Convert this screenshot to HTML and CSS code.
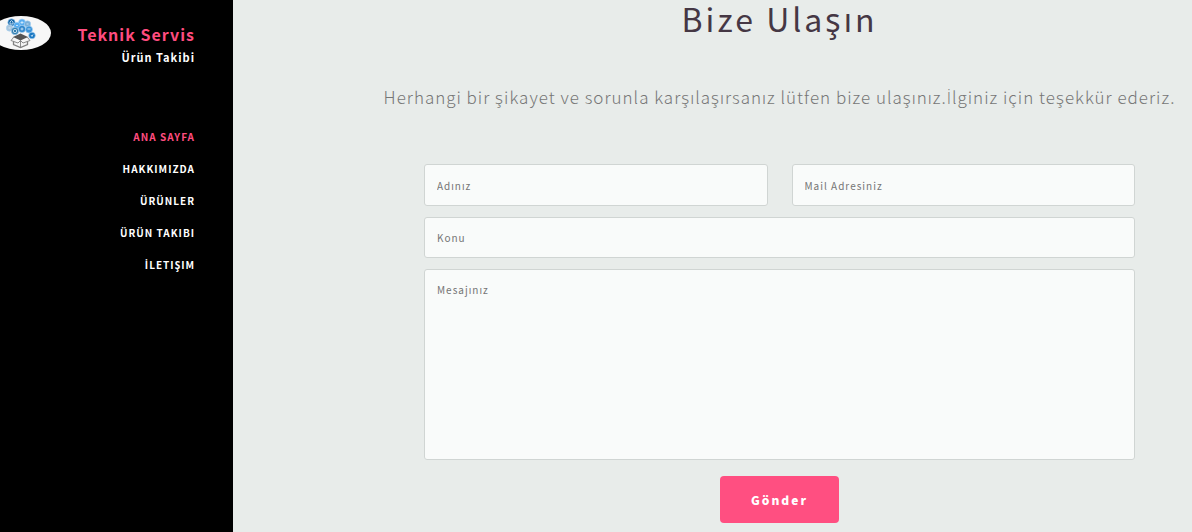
FILE: index.html
```html
<!DOCTYPE html>
<html lang="tr">
<head>
<meta charset="utf-8">
<meta name="viewport" content="width=device-width, initial-scale=1">
<title>Bize Ulaşın</title>
<link rel="stylesheet" href="styles.css">
</head>
<body>
<div class="page">
  <aside class="sidebar">
    <header class="brand">
      <svg class="brand-logo" viewBox="0 0 60 34" aria-hidden="true">
        <ellipse cx="30" cy="17" rx="30" ry="17" fill="#f7f7f7"/>
        <g fill="#2f86cb" stroke="#a9d3f5" stroke-width="0.6">
          <circle cx="20.500" cy="6.500" r="3.700" fill="#1768a8"/>
          <circle cx="31" cy="6.500" r="3.500" fill="#5aaef0"/>
          <circle cx="36.500" cy="8" r="3.200" fill="#78aed8"/>
          <circle cx="18.500" cy="12" r="3.200" fill="#a8c5dc"/>
          <circle cx="26" cy="9.500" r="3.300" fill="#55adf1"/>
          <circle cx="24" cy="15" r="3.700" fill="#337eae"/>
          <circle cx="31" cy="13" r="3.600"/>
          <circle cx="38" cy="13.500" r="3.500" fill="#3b94d9"/>
          <circle cx="41" cy="19.500" r="3.300" fill="#1977c1"/>
        </g>
        <g fill="none" stroke="#ddeefb" stroke-width="0.8">
          <path d="M19 8V6l1.500-1.500L22 6v2z"/>
          <path d="M29.500 6.500h3M31 5v3M25 9.500h2M35.500 8h2M17.500 12h2M29.500 13h3M31 11.500v3M36.500 13h3M40 19l1 1.500 1-2"/>
          <circle cx="24" cy="15" r="1.700"/>
        </g>
        <path d="M22.500 22v6.500l7 3 7-3V22l-7 3z" fill="#f4f4f4" stroke="#808080" stroke-width="1.300"/>
        <path d="M29.500 25v6M22.500 21.500l-2.500 3 7 2.500 2.500-2.500 2.500 2.500 7-2.500-2.500-3" fill="#f7f7f7" stroke="#808080" stroke-width="0.900"/>
        <path d="M29.500 17.500l7.500 3.500-7.500 3.500-7.500-3.500z" fill="#555"/>
      </svg>
      <div class="brand-text">
        <a class="brand-name" href="#">Teknik Servis</a>
        <span class="brand-sub">Ürün Takibi</span>
      </div>
    </header>
    <nav class="menu">
      <a class="menu-link menu-link-active" href="#">ANA SAYFA</a>
      <a class="menu-link" href="#">HAKKIMIZDA</a>
      <a class="menu-link" href="#">ÜRÜNLER</a>
      <a class="menu-link" href="#">ÜRÜN TAKIBI</a>
      <a class="menu-link" href="#"><span class="dotted-i">İ</span>LETIŞIM</a>
    </nav>
  </aside>
  <main class="content">
    <h1 class="title">Bize Ulaşın</h1>
    <p class="lead">Herhangi bir şikayet ve sorunla karşılaşırsanız lütfen bize ulaşınız.<span class="dotted-i">İ</span>lginiz için teşekkür ederiz.</p>
    <form class="form">
      <div class="form-row">
        <input class="field field-half" type="text" placeholder="Adınız" aria-label="Adınız">
        <input class="field field-half" type="email" placeholder="Mail Adresiniz" aria-label="Mail Adresiniz">
      </div>
      <input class="field" type="text" placeholder="Konu" aria-label="Konu">
      <textarea class="field field-message" placeholder="Mesajınız" aria-label="Mesajınız"></textarea>
      <button class="submit" type="submit">Gönder</button>
    </form>
  </main>
</div>
</body>
</html>
```
FILE: styles.css
```css
* {
  box-sizing: border-box;
}

body {
  margin: 0;
  background: #e8ecea;
  font-family: "Noto Sans CJK JP", "Noto Sans", sans-serif;
  font-size: 16px;
}

a {
  text-decoration: none;
}

/* The CJK family has no composed dotted capital I. */
.dotted-i {
  font-family: "Open Sans", sans-serif;
}

.page {
  display: flex;
  min-height: 100vh;
}

.sidebar {
  flex: 0 0 233px;
  padding: 16px 38px 0 0;
  background: #000;
  color: #fff;
}

.brand {
  display: flex;
  justify-content: space-between;
  margin-left: -9px;
}

.brand-logo {
  width: 60px;
  height: 34px;
}

.brand-text {
  display: flex;
  flex-direction: column;
  align-items: flex-end;
  padding-top: 6px;
}

.brand-name {
  color: #ff4c7f;
  font-size: 16px;
  font-weight: 700;
  line-height: 24px;
  letter-spacing: 1px;
}

.brand-sub {
  font-size: 11px;
  font-weight: 700;
  line-height: 22px;
  letter-spacing: 1px;
}

.menu {
  display: flex;
  flex-direction: column;
  align-items: flex-end;
  margin-top: 53px;
}

.menu-link {
  color: #fff;
  font-size: 10px;
  font-weight: 700;
  line-height: 32px;
  letter-spacing: 1px;
}

.menu-link-active {
  color: #ff4c7f;
}

.content {
  flex: 1;
  min-width: 0;
  padding: 0 0 8px 134px;
  text-align: center;
}

.title {
  margin: 0;
  color: #453744;
  font-size: 32px;
  font-weight: 400;
  line-height: 36px;
  letter-spacing: 3px;
}

.lead {
  margin: 47px 0 52px;
  color: #767676;
  font-size: 17px;
  font-weight: 300;
  line-height: 28px;
  letter-spacing: 1px;
}

.form {
  display: flex;
  flex-direction: column;
  gap: 11px;
  margin: 0 57px 0 57px;
}

.form-row {
  display: grid;
  grid-template-columns: 1fr 1fr;
  gap: 24px;
}

.field {
  width: 100%;
  height: 41px;
  padding: 0 12px;
  border: 1px solid #d0d5d3;
  border-radius: 3px;
  background: #f9fbfa;
  color: #453744;
  font-family: inherit;
  font-size: 10px;
  line-height: 16px;
  letter-spacing: 1px;
}

.field::placeholder {
  color: #757575;
  opacity: 1;
}

.field-half {
  height: 42px;
}

.field-message {
  height: 191px;
  padding-top: 12px;
  resize: none;
}

.submit {
  align-self: center;
  height: 47px;
  margin-top: 5px;
  padding: 0 31px;
  border: 0;
  border-radius: 4px;
  background: #ff4f81;
  color: #fff;
  font-family: inherit;
  font-size: 12px;
  font-weight: 900;
  letter-spacing: 2px;
}
```
